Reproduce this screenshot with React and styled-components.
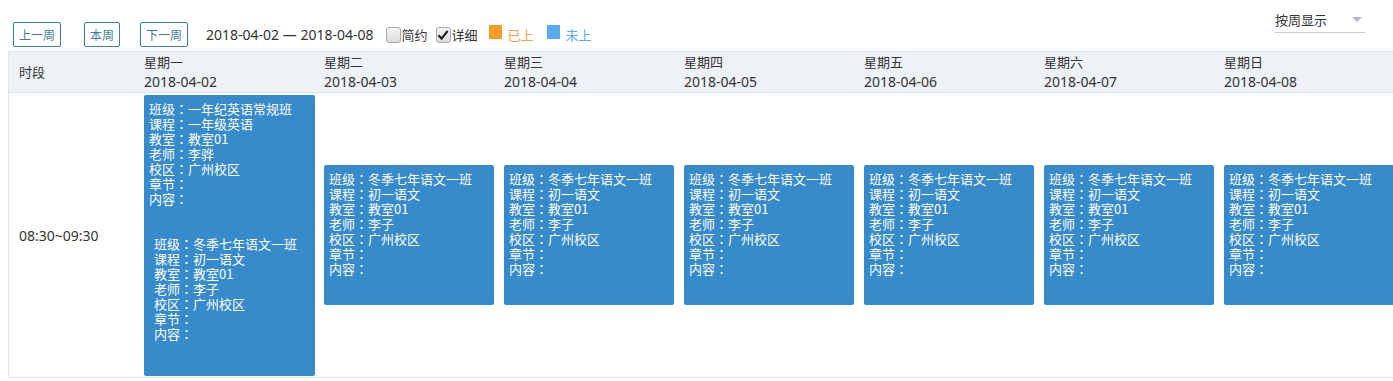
import React from 'react'
import styled, { createGlobalStyle } from 'styled-components'

const GlobalStyle = createGlobalStyle`
  html, body {
    margin: 0;
    padding: 0;
    overflow: hidden;
    background: #fff;
  }
  body {
    font-family: "Noto Sans", "Noto Sans CJK SC", sans-serif;
    font-size: 13px;
    color: #333;
  }
`

const days = [
  { name: '星期一', date: '2018-04-02' },
  { name: '星期二', date: '2018-04-03' },
  { name: '星期三', date: '2018-04-04' },
  { name: '星期四', date: '2018-04-05' },
  { name: '星期五', date: '2018-04-06' },
  { name: '星期六', date: '2018-04-07' },
  { name: '星期日', date: '2018-04-08' },
]

const winter = {
  banji: '冬季七年语文一班',
  kecheng: '初一语文',
  jiaoshi: '教室01',
  laoshi: '李子',
  xiaoqu: '广州校区',
}

const english = {
  banji: '一年纪英语常规班',
  kecheng: '一年级英语',
  jiaoshi: '教室01',
  laoshi: '李骅',
  xiaoqu: '广州校区',
}

function Line({ label, value }) {
  return (
    <div>
      {label}
      <Colon>：</Colon>
      {value}
    </div>
  )
}

function Entry({ lesson, nested }) {
  return (
    <StyledEntry $nested={nested}>
      <Line label="班级" value={lesson.banji} />
      <Line label="课程" value={lesson.kecheng} />
      <Line label="教室" value={lesson.jiaoshi} />
      <Line label="老师" value={lesson.laoshi} />
      <Line label="校区" value={lesson.xiaoqu} />
      <Line label="章节" />
      <Line label="内容" />
    </StyledEntry>
  )
}

function CheckBox({ checked }) {
  return (
    <StyledCheck>
      {checked && (
        <svg width="12" height="12" viewBox="0 0 12 12">
          <path d="M1.5 6.2 L4.6 9.6 L10.6 2" fill="none" stroke="#222" strokeWidth="2.2" />
        </svg>
      )}
    </StyledCheck>
  )
}

function App() {
  return (
    <Page>
      <GlobalStyle />
      <Toolbar>
        <ToolGroup>
          <WeekButton>上一周</WeekButton>
          <WeekButton $gap={23}>本周</WeekButton>
          <WeekButton $gap={20}>下一周</WeekButton>
          <Range>2018-04-02 — 2018-04-08</Range>
          <Option $gap={12}>
            <CheckBox />简约
          </Option>
          <Option $gap={8}>
            <CheckBox checked />详细
          </Option>
          <Legend $gap={11} $color="#f89c2b" $text="#f5a04a">
            <i />已上
          </Legend>
          <Legend $gap={13} $color="#5aaaf2" $text="#5aaaf2">
            <i />未上
          </Legend>
        </ToolGroup>
        <Select>
          按周显示
          <Caret />
        </Select>
      </Toolbar>

      <Table>
        <HeadCell $first>时段</HeadCell>
        {days.map((d) => (
          <HeadCell key={d.date}>
            <div>{d.name}</div>
            <Num>{d.date}</Num>
          </HeadCell>
        ))}

        <TimeCell>
          <Num>08:30~09:30</Num>
        </TimeCell>
        <DayCell>
          <Card $tall>
            <Entry lesson={english} />
            <Entry lesson={winter} nested />
          </Card>
        </DayCell>
        {days.slice(1).map((d) => (
          <DayCell key={d.date}>
            <Card>
              <Entry lesson={winter} />
            </Card>
          </DayCell>
        ))}
      </Table>
    </Page>
  )
}

const Page = styled.div`
  padding: 0 8px;
`

const Toolbar = styled.div`
  display: flex;
  justify-content: space-between;
  align-items: flex-start;
  height: 51px;
  width: 1377px;
`

const ToolGroup = styled.div`
  display: flex;
  align-items: center;
  margin-top: 22px;
  padding-left: 5px;
  height: 25px;
`

const WeekButton = styled.button`
  height: 25px;
  padding: 0 5px;
  margin-left: ${(p) => p.$gap || 0}px;
  border: 1px solid #3f7d9c;
  border-radius: 2px;
  background: #fff;
  color: #3f7d9c;
  font-family: "Noto Sans CJK SC", sans-serif;
  font-size: 12px;
  line-height: 23px;
`

const Range = styled.span`
  margin-left: 18px;
  font-size: 14px;
  color: #333;
`

const Option = styled.span`
  display: flex;
  align-items: center;
  margin-left: ${(p) => p.$gap}px;
  font-size: 13px;
  color: #333;
`

const StyledCheck = styled.span`
  display: inline-flex;
  align-items: center;
  justify-content: center;
  box-sizing: border-box;
  width: 15px;
  height: 16px;
  margin-right: 1px;
  border: 1px solid #a9a9a9;
  border-radius: 3px;
  background: linear-gradient(#f4f4f4, #dcdcdc);
`

const Legend = styled.span`
  display: flex;
  align-items: center;
  margin-left: ${(p) => p.$gap}px;
  color: ${(p) => p.$text};
  font-size: 13px;

  & i {
    display: inline-block;
    width: 13px;
    height: 14px;
    margin: -5px 6px 0 0;
    background: ${(p) => p.$color};
  }
`

const Select = styled.div`
  position: relative;
  box-sizing: border-box;
  width: 90px;
  height: 24px;
  margin-top: 9px;
  margin-right: 20px;
  border-bottom: 1px solid #c8ccd2;
  font-size: 13px;
  line-height: 22px;
  color: #333;
`

const Caret = styled.span`
  position: absolute;
  right: 3px;
  top: 8px;
  width: 0;
  height: 0;
  border-left: 5px solid transparent;
  border-right: 5px solid transparent;
  border-top: 5px solid #b5b9bf;
`

const Table = styled.div`
  display: grid;
  grid-template-columns: 135px repeat(7, 180px);
  grid-template-rows: 41px 285px;
  width: 1395px;
  border-left: 1px solid #dfe6ec;
  border-top: 1px solid #dfe6ec;
`

const HeadCell = styled.div`
  display: flex;
  flex-direction: column;
  justify-content: center;
  padding-left: ${(p) => (p.$first ? '10px' : '0')};
  background: #eef1f6;
  border-bottom: 1px solid #dfe6ec;
  color: #333;
  line-height: 19px;
`

const Num = styled.span`
  font-size: 14px;
`

const TimeCell = styled.div`
  display: flex;
  align-items: center;
  padding-left: 10px;
  border-bottom: 1px solid #dfe6ec;
`

const DayCell = styled.div`
  display: flex;
  align-items: center;
  border-bottom: 1px solid #dfe6ec;
`

const Card = styled.div`
  box-sizing: border-box;
  width: ${(p) => (p.$tall ? '171px' : '170px')};
  height: ${(p) => (p.$tall ? '281px' : '140px')};
  background: #378bcb;
  border-radius: 2px;
  color: #fff;
  overflow: hidden;
`

const StyledEntry = styled.div`
  box-sizing: border-box;
  height: ${(p) => (p.$nested ? '141px' : '140px')};
  padding: ${(p) => (p.$nested ? '1px 10px' : '6px 5px')};
  font-family: "Noto Sans CJK SC", sans-serif;
  font-size: 13px;
  line-height: 15px;
  white-space: nowrap;
`

const Colon = styled.span`
  font-family: "Noto Sans CJK TC", sans-serif;
`

export default App
